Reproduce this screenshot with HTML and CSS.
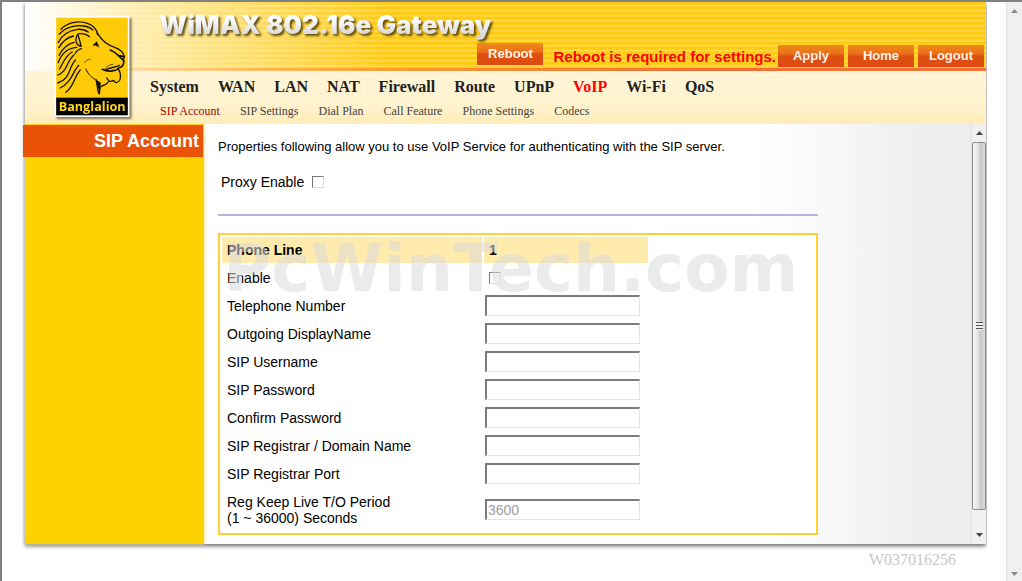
FILE: index.html
```html
<!DOCTYPE html>
<html lang="en">
<head>
<meta charset="utf-8">
<title>WiMAX 802.16e Gateway</title>
<link rel="stylesheet" href="styles.css">
</head>
<body>
<div class="window">
  <div class="page">
    <div class="panel">
      <header class="banner">
        <svg class="logo" viewBox="163 48 225 303" role="img" aria-label="Banglalion">
          <rect x="163" y="48" width="225" height="303" fill="#fff"/>
          <rect x="168" y="53" width="215" height="241" fill="#ffcb08"/>
          <rect x="168" y="293" width="215" height="53" fill="#000"/>
          <g fill="none" stroke="#17130a" stroke-width="4" stroke-linecap="round" stroke-linejoin="round">
            <path d="M182 88C200 68 235 60 262 70C280 76 290 86 292 104"/>
            <path d="M177 103C192 84 222 74 250 78C264 80 272 84 278 90"/>
            <path d="M174 128C184 106 204 92 232 88C246 87 256 90 264 96"/>
            <path d="M176 143C186 126 202 112 220 108"/>
            <path d="M243 139C228 136 222 120 233 102C236 114 240 126 243 139"/>
            <path d="M236 101C250 100 260 103 268 110"/>
            <path d="M177 166C186 146 202 132 222 127"/>
            <path d="M174 188C184 160 204 144 230 142"/>
            <path d="M178 207C192 184 196 166 216 156"/>
            <path d="M173 225C204 212 198 184 222 164"/>
            <path d="M173 249C214 234 204 202 226 180"/>
            <path d="M180 264C216 246 216 216 236 196"/>
            <path d="M197 277C222 258 220 234 240 210"/>
            <path d="M226 160C230 150 236 148 244 146"/>
            <path d="M292 100C304 120 324 136 344 142C360 148 370 158 373 170"/>
            <path d="M330 150C342 154 350 162 359 171L368 180L372 170L357 167" stroke-width="5"/>
            <path d="M371 180C372 194 364 202 356 204C350 212 326 218 306 208" stroke-width="5"/>
            <path d="M316 210C330 202 346 202 358 196"/>
            <path d="M338 193C326 194 318 200 314 208" stroke-width="2"/>
            <path d="M354 207C364 220 362 230 359 240C351 252 344 248 340 241C328 248 324 242 320 234"/>
            <path d="M257 207C265 226 278 236 290 240" stroke-width="3"/>
            <path d="M288 242C294 254 288 264 297 282C301 270 296 262 304 258C314 256 320 252 324 246"/>
            <path d="M254 188C256 182 262 178 270 178" stroke-width="2"/>
          </g>
          <path d="M276 137L290 124L298 143C290 137 284 136 276 137Z" fill="#17130a"/>
          <path d="M286 238L302 248L298 276L290 256Z" fill="#17130a"/>
          <text class="logo-name" x="276" y="334" text-anchor="middle">Banglalion</text>
        </svg>
        <div class="banner-top">
          <h1 class="title">WiMAX 802.16e Gateway</h1>
          <div class="actions">
            <button class="action action-reboot" type="button">Reboot</button>
            <strong class="notice">Reboot is required for settings.</strong>
            <button class="action" type="button">Apply</button>
            <button class="action" type="button">Home</button>
            <button class="action" type="button">Logout</button>
          </div>
        </div>
        <nav class="menus">
          <div class="menu">
            <a href="#system">System</a><a href="#wan">WAN</a><a href="#lan">LAN</a><a href="#nat">NAT</a><a href="#firewall">Firewall</a><a href="#route">Route</a><a href="#upnp">UPnP</a><a class="menu-current" href="#voip">VoIP</a><a href="#wifi">Wi-Fi</a><a href="#qos">QoS</a>
          </div>
          <div class="submenu">
            <a class="submenu-current" href="#account">SIP Account</a><a href="#settings">SIP Settings</a><a href="#dial">Dial Plan</a><a href="#call">Call Feature</a><a href="#phone">Phone Settings</a><a href="#codecs">Codecs</a>
          </div>
        </nav>
      </header>
      <div class="body">
        <aside class="side"><h2 class="side-title">SIP Account</h2></aside>
        <main class="content">
          <p class="intro">Properties following allow you to use VoIP Service for authenticating with the SIP server.</p>
          <div class="proxy"><label for="proxy">Proxy Enable</label><input class="check" type="checkbox" id="proxy"></div>
          <hr class="rule">
          <div class="box">
            <table class="form">
              <tr class="form-head"><th class="label-col">Phone Line</th><th class="field-col">1</th></tr>
              <tr><td><label for="enable">Enable</label></td><td><input class="check" type="checkbox" id="enable"></td></tr>
              <tr><td><label for="tel">Telephone Number</label></td><td class="field"><input class="text" id="tel"></td></tr>
              <tr><td><label for="disp">Outgoing DisplayName</label></td><td class="field"><input class="text" id="disp"></td></tr>
              <tr><td><label for="user">SIP Username</label></td><td class="field"><input class="text" id="user"></td></tr>
              <tr><td><label for="pass">SIP Password</label></td><td class="field"><input class="text" type="password" id="pass"></td></tr>
              <tr><td><label for="conf">Confirm Password</label></td><td class="field"><input class="text" type="password" id="conf"></td></tr>
              <tr><td><label for="reg">SIP Registrar / Domain Name</label></td><td class="field"><input class="text" id="reg"></td></tr>
              <tr><td><label for="port">SIP Registrar Port</label></td><td class="field"><input class="text" id="port"></td></tr>
              <tr class="tall"><td><label for="keep">Reg Keep Live T/O Period<br>(1 ~ 36000) Seconds</label></td><td class="field"><input class="text" id="keep" value="3600" disabled></td></tr>
            </table>
            <div class="watermark">PcWinTech.com</div>
          </div>
        </main>
        <div class="bar bar-inner">
          <svg class="arrow" viewBox="0 0 7 4"><path d="M0 4L3.5 0L7 4Z" fill="#444"/></svg>
          <div class="thumb"><span class="grip"></span></div>
          <svg class="arrow" viewBox="0 0 7 4"><path d="M0 0L3.5 4L7 0Z" fill="#444"/></svg>
        </div>
      </div>
    </div>
    <footer class="serial">W037016256</footer>
  </div>
  <div class="bar bar-outer">
    <svg class="arrow" viewBox="0 0 7 4"><path d="M0 4L3.5 0L7 4Z" fill="#888"/></svg>
    <svg class="arrow" viewBox="0 0 7 4"><path d="M0 0L3.5 4L7 0Z" fill="#888"/></svg>
  </div>
</div>
</body>
</html>
```
FILE: styles.css
```css
* { box-sizing: border-box; }
body {
  margin: 0;
  font-family: "Liberation Sans", Arial, sans-serif;
  font-size: 14px;
  line-height: 16px;
  color: #000;
  background: #fff;
}
a { color: inherit; text-decoration: none; }
.window {
  display: flex;
  min-height: 100vh;
  border-top: 2px solid #808080;
  border-left: 2px solid #808080;
}
.page { flex: 1; padding: 0 20px 0 23px; }
.panel { box-shadow: 0 2px 4px #666; clip-path: inset(0 -1px -8px -6px); }

.banner { position: relative; }
.logo {
  position: absolute;
  left: 29px;
  top: 14px;
  width: 76px;
  height: 101px;
  filter: drop-shadow(2px 2px 1px rgba(80, 60, 20, .7));
}
.logo-name { font: 700 38px "Open Sans", sans-serif; fill: #ffd61f; }
.banner-top {
  display: flex;
  justify-content: space-between;
  height: 69px;
  padding: 0 2px 4px 134px;
  background:
    linear-gradient(90deg, rgba(245, 110, 40, 0), #f37031 70%) bottom / 100% 3px no-repeat,
    linear-gradient(90deg, #fff 0, rgba(255, 255, 255, .7) 10%, rgba(255, 255, 255, 0) 38%),
    repeating-linear-gradient(#ffcb10 0, #ffcb10 2px, #ffdb58 4px, #ffcb10 5px);
}
.title {
  margin: 7px 0 0;
  font: 900 26px/32px Inter, "Arial Black", sans-serif;
  white-space: nowrap;
  color: transparent;
  background: linear-gradient(#fff 30%, #d8d8d8 80%);
  -webkit-background-clip: text;
  background-clip: text;
  align-self: flex-start;
  filter: drop-shadow(2px 2px 1px rgba(70, 50, 0, .85));
}
.actions { display: flex; align-items: flex-end; gap: 4px; margin-left: -24px; }
.action {
  width: 66px;
  height: 22px;
  padding: 0 0 1px;
  border: 0;
  font: 700 13px/20px "Liberation Sans", Arial, sans-serif;
  color: #fff3e4;
  background: linear-gradient(#f08a1c 0, #ea701a 40%, #de4f12 50%, #dd4b10);
}
.action-reboot { margin: 0 6px 2px 0; }
.notice { margin-right: -2px; padding-bottom: 2px; font-size: 15px; color: #f00; white-space: nowrap; }
.menus {
  height: 53px;
  padding: 6px 0 0 125px;
  font-family: "Liberation Serif", "Times New Roman", serif;
  background: linear-gradient(#fff5d6, #fff3d0 60%, #ffecb8);
}
.menu, .submenu { display: flex; white-space: nowrap; }
.menu { gap: 19px; font-size: 16px; line-height: 20px; font-weight: 700; color: #222; }
.menu-current { color: #f00; }
.submenu { gap: 20px; padding: 6px 0 0 10px; font-size: 12px; line-height: 16px; color: #444; }
.submenu-current { color: #a00; }

.body { display: flex; background: linear-gradient(90deg, #fff 76%, #f0f2f1 90%, #ebeeed 96%); }
.side { width: 179px; background: #fdd000; border-top: 1px solid #fdd000; box-shadow: 1px 0 3px #ffedb0; }
.side-title {
  margin: 0 1px 0 -2px;
  padding: 0 4px;
  font-size: 18px;
  line-height: 32px;
  text-align: right;
  color: #fff;
  background: #ea5205;
}
.content { flex: 1; padding: 15px 0 9px 14px; }
.intro { margin: 0; font-size: 13px; }
.proxy { display: flex; align-items: center; gap: 8px; padding: 19px 3px 24px; }
.check {
  appearance: none;
  display: block;
  width: 12px;
  height: 12px;
  margin: 0;
  border: 1px solid;
  border-color: #777 #ddd #ddd #777;
  background: #fff;
}
.rule { width: 600px; max-width: 100%; height: 2px; margin: 0 0 17px; border: 0; background: #b9b2dc; }
.box { position: relative; width: 600px; max-width: 100%; border: 2px solid #fdd035; background: #fff; }
.form { border-spacing: 2px; }
.form td, .form th { height: 26px; padding: 0 5px; text-align: left; vertical-align: middle; }
.form th { font-size: 14px; background: #ffecac; }
.form .label-col { width: 260px; }
.form .field-col { width: 164px; }
.form .field { padding: 0 1px 2px; }
.form .tall td { height: 42px; }
.text {
  display: block;
  width: 155px;
  height: 21px;
  padding: 1px;
  border: 2px solid;
  border-color: #7c7c7c #e3e3e3 #e3e3e3 #7c7c7c;
  border-bottom-width: 1px;
  border-right-width: 1px;
  font: 14px/16px "Liberation Sans", Arial, sans-serif;
  background: #fff;
}
.text:disabled { color: #a0a0a0; }
.watermark {
  position: absolute;
  left: 3px;
  top: -2px;
  font: 700 66px/72px "DejaVu Sans", Verdana, sans-serif;
  color: rgba(218, 218, 218, .55);
  pointer-events: none;
}

.bar { display: flex; flex-direction: column; align-items: center; justify-content: space-between; background: #f0f0f0; }
.arrow { width: 7px; height: 4px; }
.bar-inner { width: 15px; padding: 7px 0; border-left: 1px solid #e3e3e3; }
.bar-inner .arrow:last-child { margin-top: 23px; }
.thumb {
  display: flex;
  flex: 1;
  align-items: center;
  justify-content: center;
  align-self: stretch;
  margin-top: 7px;
  border: 1px solid #8e8e8e;
  border-radius: 2px;
  background: linear-gradient(90deg, #f6f6f6 0, #e2e2e4 45%, #c8c8cc 60%, #dcdcdf);
}
.grip { width: 7px; height: 8px; background: repeating-linear-gradient(#555 0, #555 1px, #eee 1px, #eee 3px); }
.bar-outer { width: 16px; padding: 7px 0 5px; border-left: 1px solid #e3e3e3; }
.serial {
  padding: 8px 30px 0;
  text-align: right;
  font-family: "Liberation Serif", "Times New Roman", serif;
  font-size: 16px;
  color: #c8c8c8;
}
```
